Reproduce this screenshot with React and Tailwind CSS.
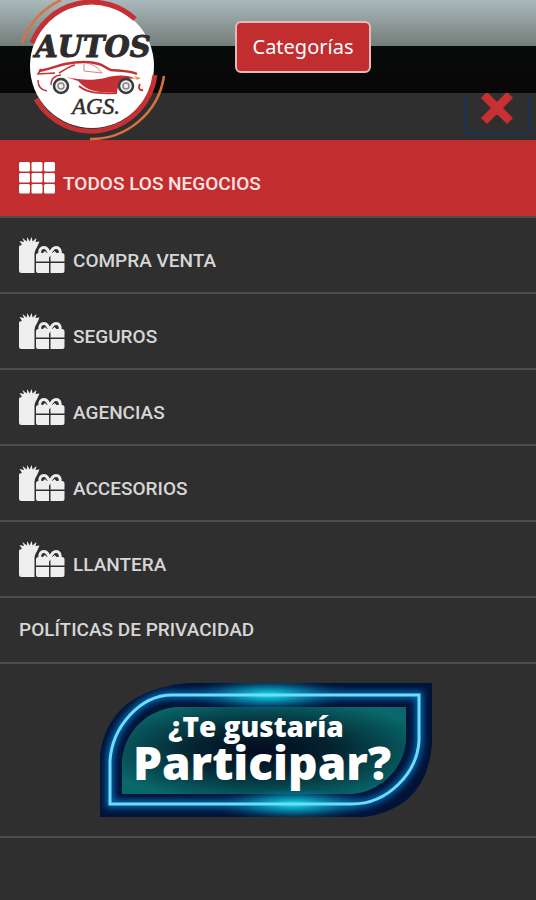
import React, { useState } from 'react';

const menuItems = [
  { id: 'compra-venta', label: 'COMPRA VENTA' },
  { id: 'seguros', label: 'SEGUROS' },
  { id: 'agencias', label: 'AGENCIAS' },
  { id: 'accesorios', label: 'ACCESORIOS' },
  { id: 'llantera', label: 'LLANTERA' },
];

const GridIcon = () => (
  <svg viewBox="0 0 36 32" className="h-8 w-9 shrink-0" fill="#fff" aria-hidden="true">
    {[0, 11, 22].map((y) =>
      [0, 12.5, 25].map((x) => <rect key={`${x}-${y}`} x={x} y={y} width="11" height="9.6" rx="1.5" />)
    )}
  </svg>
);

const GiftsIcon = () => (
  <svg viewBox="0 0 46 36" className="h-9 w-[46px] shrink-0" aria-hidden="true">
    <g fill="#eeeeee">
      {/* tall gift */}
      <path d="M3 8 L0.500 4 L5 5 L3.500 1 L7.800 4.500 L8.300 0 L10.500 4.500 L12.700 0 L13.500 4.500 L17.500 1 L16.500 5 L20.500 4.500 L18.500 9 C18 11 16 12 15.500 17 V36 H2.500 Q0 36 0 33.500 V10 Q0 8 3 8Z" />
      {/* wide gift */}
      <path d="M17 24.500 V18.500 Q17 16 19.500 16 H30 V24.500Z M31.500 24.500 V16 H43 Q45.500 16 45.500 18.500 V24.500Z" />
      <path d="M17 26 H30 V36 H19 Q17 36 17 34Z M31.500 26 H45.500 V34 Q45.500 36 43.500 36 H31.500Z" />
    </g>
    <path
      d="M21 17 C20 13 22 10.500 25 10.500 C28 10.500 29 13 30.800 17 C32.500 13 34 10.500 37 10.500 C40 10.500 42 13 41 17 M25 17 L27 15 M36.500 17 L34.500 15"
      fill="none"
      stroke="#eeeeee"
      strokeWidth="3"
    />
  </svg>
);

const Logo = () => (
  <svg viewBox="0 0 150 142" className="h-[142px] w-[150px]" role="img" aria-label="Autos Ags">
    <circle cx="73" cy="66" r="62" fill="#fff" />
    <g fill="none" stroke="#c43033" strokeWidth="5">
      <path d="M13 43 A64 64 0 0 1 116 19" />
      <path d="M17 99 A64 64 0 0 0 136 75" />
    </g>
    <g fill="none" stroke="#d9713f" strokeWidth="2.500">
      <path d="M3 43 A74 74 0 0 1 42 0" />
      <path d="M71 139 A74 74 0 0 0 145 76" />
    </g>
    <text x="74" y="57" textAnchor="middle" fontSize="29" fontWeight="700" fontStyle="italic" fill="#2d2b2c" stroke="#2d2b2c" fontFamily='"DejaVu Serif", serif'>
      AUTOS
    </text>
    {/* car */}
    <g fill="none" stroke="#c43033">
      <path d="M20 71 C30 69 38 66 46 64 C56 62 70 61 80 64 C86 66 88 69 92 70 C102 71 112 71 118 74" strokeWidth="2.500" />
      <path d="M22 69 L19 74 L36 73 M19 80 C19 86 21 90 28 91 M32 85 C32 78 37 75 42 75 M40 73 C46 70 50 66 56 65" strokeWidth="1.500" />
      <path d="M65 64 V71 L83 73 M71 64 C77 66 80 69 83 73" stroke="#d98080" />
      <path d="M60 86 C67 92 76 94 98 93 M121 84 C119 87 120 91 124 90" strokeWidth="2" />
    </g>
    <path d="M47 77 C61 80 73 81 86 78 C94 75 109 74 117 79 C106 77 99 82 98 92 H82 C69 91 64 86 59 81 Z" fill="#c43033" />
    <path d="M115 76 l7 2 -4 2z" fill="#e89a45" />
    <g fill="#eee" stroke="#3b3b3b" strokeWidth="2.500">
      <circle cx="42" cy="86" r="7" />
      <circle cx="107" cy="86" r="7" />
    </g>
    <g fill="none" stroke="#888" strokeWidth="1.500">
      <circle cx="42" cy="86" r="3" />
      <circle cx="107" cy="86" r="3" />
    </g>
    <text x="77" y="114" textAnchor="middle" fontSize="23" fontStyle="italic" fill="#2d2b2c" stroke="#2d2b2c" strokeWidth="0.500" fontFamily='"Liberation Serif", serif'>
      AGS.
    </text>
  </svg>
);

const BannerFrame = () => (
  <svg viewBox="0 0 332 134" className="absolute inset-0 h-full w-full" aria-hidden="true">
    <defs>
      <radialGradient id="inner" cx="0.5" cy="0.5" r="0.6">
        <stop offset="0" stopColor="#020c20" />
        <stop offset="0.4" stopColor="#04222f" />
        <stop offset="1" stopColor="#08686b" />
      </radialGradient>
      <radialGradient id="flare">
        <stop offset="0" stopColor="#13e4ee" />
        <stop offset="0.5" stopColor="#088fae" stopOpacity="0.6" />
        <stop offset="1" stopColor="#04315f" stopOpacity="0" />
      </radialGradient>
      <filter id="glow" x="-10%" y="-20%" width="120%" height="140%">
        <feGaussianBlur stdDeviation="3" />
      </filter>
      <clipPath id="shape">
        <path d="M88 0 H332 V62 Q326 126 264 134 H0 V72 Q8 8 88 0Z" />
      </clipPath>
    </defs>
    <g clipPath="url(#shape)">
      <rect width="332" height="134" fill="#021338" />
      <path d="M76 24 H306 V58 C304 86 280 109 252 111 H22 V76 C26 46 48 27 76 24Z" fill="url(#inner)" />
      <path d="M72 12 H319 V58 C317 90 288 121 252 121 H10 V78 C12 44 40 12 72 12Z" fill="none" stroke="#0669b0" strokeWidth="8" filter="url(#glow)" />
      <ellipse cx="168" cy="12" rx="84" ry="18" fill="url(#flare)" />
      <ellipse cx="193" cy="121" rx="84" ry="18" fill="url(#flare)" />
      <path d="M72 12 H319 V58 C317 90 288 121 252 121 H10 V78 C12 44 40 12 72 12Z" fill="none" stroke="#70dcfa" strokeWidth="3" />
    </g>
  </svg>
);

const App = () => {
  const [open, setOpen] = useState(true);

  return (
    <div className="min-h-screen bg-[#2f2f2f] font-['Roboto',sans-serif]">
      <header className="relative z-10 flex h-[93px] items-center justify-center bg-[linear-gradient(#aab9bb_0px,#747d7a_46px,#080c09_46px,#070707_93px)] pl-[70px]">
        <a href="#inicio" className="absolute top-0 left-[19px]">
          <Logo />
        </a>
        <button
          type="button"
          onClick={() => setOpen(!open)}
          className="h-[52px] rounded-md border-2 border-[#e3b9bc] bg-[#c22d30] px-4 font-['Noto_Sans',sans-serif] text-xl text-white"
        >
          Categorías
        </button>
      </header>

      {open && (
        <nav>
          <div className="flex h-[47px] items-end justify-end overflow-hidden pr-1.5 pb-1.5">
            <button
              type="button"
              aria-label="Cerrar"
              onClick={() => setOpen(false)}
              className="flex h-14 w-[66px] shrink-0 items-center justify-center rounded border-2 border-[#1a3358] pt-1"
            >
              <svg viewBox="0 0 32 32" className="size-8" aria-hidden="true">
                <path
                  d="M6 1 L16 11 L26 1 L31 6 L21 16 L31 26 L26 31 L16 21 L6 31 L1 26 L11 16 L1 6Z"
                  fill="#c83034"
                  stroke="#c83034"
                  strokeWidth="1.5"
                  strokeLinejoin="round"
                />
              </svg>
            </button>
          </div>

          <ul className="text-[19px] font-medium text-[#d6d6d6]">
            <li className="bg-[#c22d30]">
              <a href="#todos" className="flex h-[76px] items-center gap-2 px-[19px] text-[#ffe3e3]">
                <GridIcon />
                <span className="pt-3">TODOS LOS NEGOCIOS</span>
              </a>
            </li>
            {menuItems.map((item) => (
              <li key={item.id} className="border-t-2 border-[#4d4d4d]">
                <a href={`#${item.id}`} className="flex h-[74px] items-center gap-2 px-[19px]">
                  <GiftsIcon />
                  <span className="pt-3">{item.label}</span>
                </a>
              </li>
            ))}
            <li className="border-t-2 border-[#4d4d4d]">
              <a href="#privacidad" className="flex h-16 items-center px-[19px]">
                POLÍTICAS DE PRIVACIDAD
              </a>
            </li>
            <li className="border-y-2 border-[#4d4d4d] py-[19px] pr-1">
              <a
                href="#participar"
                className="relative mx-auto flex h-[134px] w-[332px] flex-col items-center justify-center pr-2 pb-2 font-['Open_Sans',sans-serif] font-extrabold text-white"
              >
                <BannerFrame />
                <span className="relative pr-3 text-[28px] leading-8">¿Te gustaría</span>
                <span className="relative text-[46px] leading-10">Participar?</span>
              </a>
            </li>
          </ul>
        </nav>
      )}
    </div>
  );
};

export default App;
